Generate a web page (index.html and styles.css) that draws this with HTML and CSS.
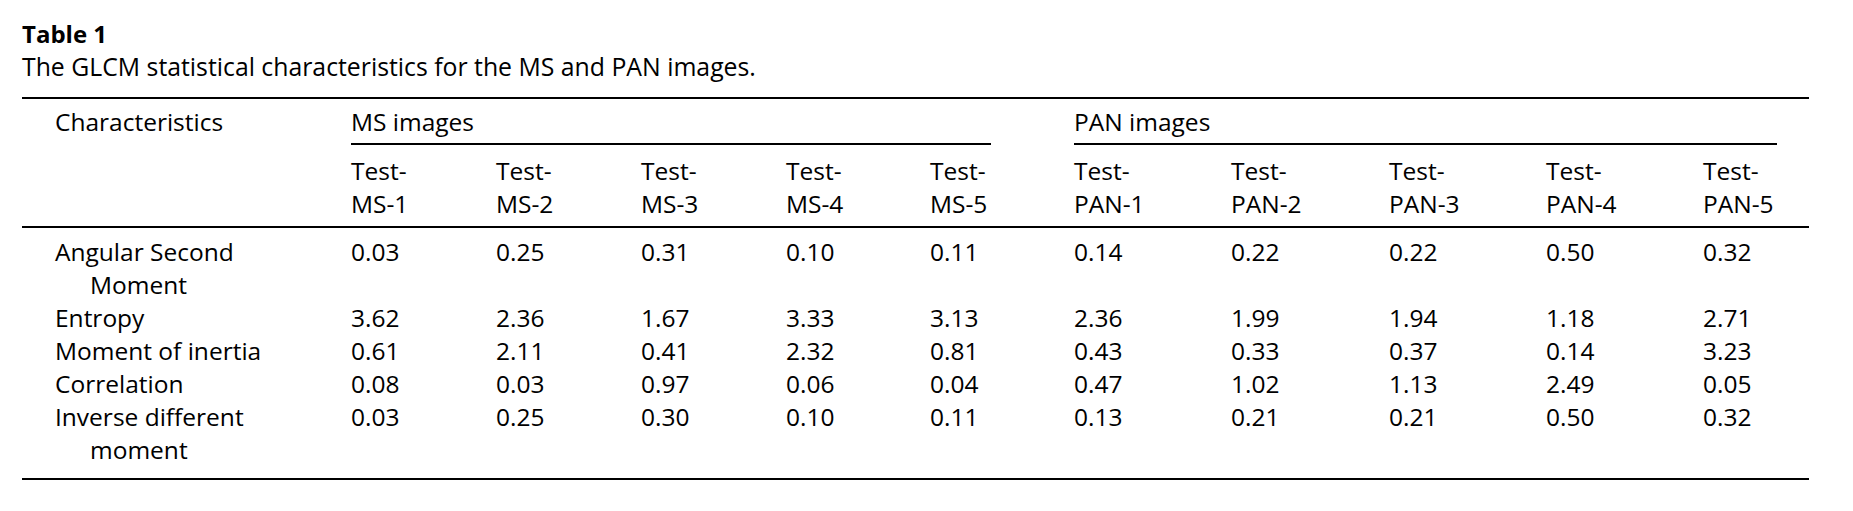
FILE: index.html
```html
<!DOCTYPE html>
<html lang="en">
  <head>
    <meta charset="utf-8">
    <title>Table 1 - GLCM statistical characteristics</title>
    <link rel="stylesheet" href="styles.css">
  </head>
  <body>
    <div class="page">
      <div class="table-title">Table 1</div>
      <div class="table-caption">The GLCM statistical characteristics for the MS and PAN images.</div>
      <table class="glcm">
        <colgroup>
          <col class="c-name">
          <col class="c-ms"><col class="c-ms"><col class="c-ms"><col class="c-ms-end"><col class="c-ms-end">
          <col class="c-pan"><col class="c-pan-wide"><col class="c-pan"><col class="c-pan"><col class="c-pan-end">
        </colgroup>
        <thead>
          <tr class="group-row">
            <th class="name-head" rowspan="2">Characteristics</th>
            <th colspan="5"><div class="group ms-group">MS images</div></th>
            <th colspan="5"><div class="group pan-group">PAN images</div></th>
          </tr>
          <tr class="sub-row">
            <th>Test-<br>MS-1</th>
            <th>Test-<br>MS-2</th>
            <th>Test-<br>MS-3</th>
            <th>Test-<br>MS-4</th>
            <th>Test-<br>MS-5</th>
            <th>Test-<br>PAN-1</th>
            <th>Test-<br>PAN-2</th>
            <th>Test-<br>PAN-3</th>
            <th>Test-<br>PAN-4</th>
            <th>Test-<br>PAN-5</th>
          </tr>
        </thead>
        <tbody>
          <tr>
            <td class="name">Angular Second Moment</td>
            <td>0.03</td><td>0.25</td><td>0.31</td><td>0.10</td><td>0.11</td>
            <td>0.14</td><td>0.22</td><td>0.22</td><td>0.50</td><td>0.32</td>
          </tr>
          <tr>
            <td class="name">Entropy</td>
            <td>3.62</td><td>2.36</td><td>1.67</td><td>3.33</td><td>3.13</td>
            <td>2.36</td><td>1.99</td><td>1.94</td><td>1.18</td><td>2.71</td>
          </tr>
          <tr>
            <td class="name">Moment of inertia</td>
            <td>0.61</td><td>2.11</td><td>0.41</td><td>2.32</td><td>0.81</td>
            <td>0.43</td><td>0.33</td><td>0.37</td><td>0.14</td><td>3.23</td>
          </tr>
          <tr>
            <td class="name">Correlation</td>
            <td>0.08</td><td>0.03</td><td>0.97</td><td>0.06</td><td>0.04</td>
            <td>0.47</td><td>1.02</td><td>1.13</td><td>2.49</td><td>0.05</td>
          </tr>
          <tr>
            <td class="name">Inverse different moment</td>
            <td>0.03</td><td>0.25</td><td>0.30</td><td>0.10</td><td>0.11</td>
            <td>0.13</td><td>0.21</td><td>0.21</td><td>0.50</td><td>0.32</td>
          </tr>
        </tbody>
      </table>
    </div>
  </body>
</html>
```

FILE: styles.css
```css
body { margin: 0; background: #fff; color: #000; font-family: "Open Sans", "Noto Sans", sans-serif; }
.page { padding: 21px 0 0 22px; width: 1787px; }
.table-title { font-size: 24px; font-weight: bold; line-height: 25px; }
.table-caption { font-size: 24.8px; line-height: 25px; margin: 8px 0 18px; }

.glcm { width: 1787px; table-layout: fixed; border-collapse: separate; border-spacing: 0; border-top: 2px solid #000; border-bottom: 2px solid #000; font-size: 24.5px; line-height: 33px; }
.c-name { width: 329px; }
.c-ms { width: 145px; }
.c-ms-end { width: 144px; }
.c-pan { width: 157px; }
.c-pan-wide { width: 158px; }
.c-pan-end { width: 106px; }

.glcm th, .glcm td { padding: 0; text-align: left; vertical-align: top; font-weight: normal; }
.group-row th { padding-top: 6px; }
.group { padding-bottom: 5px; border-bottom: 2px solid #000; }
.ms-group { margin-right: 83px; }
.pan-group { margin-right: 32px; }
.sub-row th { padding-top: 9px; padding-bottom: 6px; border-bottom: 2px solid #000; }
.glcm th.name-head { padding-left: 33px; border-bottom: 2px solid #000; }

.glcm td.name { padding-left: 68px; padding-right: 66px; text-indent: -35px; }
.glcm tbody tr:first-child td { padding-top: 7px; }
.glcm tbody tr:last-child td { padding-bottom: 12px; }
```
